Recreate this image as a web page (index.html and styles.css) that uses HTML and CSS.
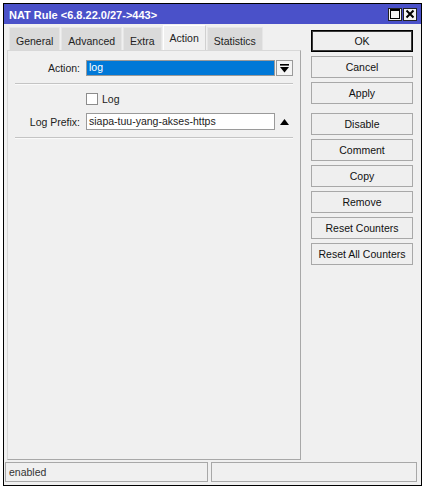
FILE: index.html
```html
<!DOCTYPE html>
<html>
<head>
<meta charset="utf-8">
<link rel="stylesheet" href="styles.css">
</head>
<body>
<div class="window">
  <div class="titlebar">
    <span class="title">NAT Rule &lt;6.8.22.0/27-&gt;443&gt;</span>
    <div class="tb-btns">
      <span class="tb-btn"><svg width="10" height="10" viewBox="0 0 10 10"><rect x="0.5" y="0.5" width="9" height="9" fill="none" stroke="#000" stroke-width="1"/><rect x="0" y="0" width="10" height="2" fill="#000"/></svg></span>
      <span class="tb-btn"><svg width="10" height="10" viewBox="0 0 10 10"><path d="M1.5 1.5 L8.5 8.5 M8.5 1.5 L1.5 8.5" stroke="#000" stroke-width="2"/></svg></span>
    </div>
  </div>
  <div class="main">
    <div class="left">
      <div class="tabs">
        <span class="tab">General</span>
        <span class="tab">Advanced</span>
        <span class="tab">Extra</span>
        <span class="tab active">Action</span>
        <span class="tab">Statistics</span>
      </div>
      <div class="panel">
        <div class="row row-action">
          <span class="label">Action:</span>
          <span class="select">log</span>
          <span class="dd-btn"><svg width="9" height="9" viewBox="0 0 9 9"><rect x="0" y="0" width="9" height="1.6" fill="#000"/><polygon points="0,3 9,3 4.5,8.5" fill="#000"/></svg></span>
        </div>
        <div class="sep"></div>
        <div class="row row-check">
          <span class="label"></span>
          <span class="checkbox"></span>
          <span class="check-label">Log</span>
        </div>
        <div class="row row-prefix">
          <span class="label">Log Prefix:</span>
          <span class="input">siapa-tuu-yang-akses-https</span>
          <span class="up-btn"><svg width="9" height="6" viewBox="0 0 9 6"><polygon points="0,6 9,6 4.5,0" fill="#000"/></svg></span>
        </div>
        <div class="sep"></div>
      </div>
    </div>
    <div class="buttons">
      <button class="btn default">OK</button>
      <button class="btn">Cancel</button>
      <button class="btn">Apply</button>
      <button class="btn group">Disable</button>
      <button class="btn">Comment</button>
      <button class="btn">Copy</button>
      <button class="btn">Remove</button>
      <button class="btn">Reset Counters</button>
      <button class="btn">Reset All Counters</button>
    </div>
  </div>
  <div class="status">
    <div class="field">enabled</div>
    <div class="field"></div>
  </div>
</div>
</body>
</html>
```

FILE: styles.css
```css
* { box-sizing: border-box; }
html, body { margin: 0; padding: 0; }
body {
  background: #ffffff;
  font-family: "Liberation Sans", Arial, sans-serif;
  font-size: 10.5px;
  color: #000;
  width: 425px;
  height: 486px;
  overflow: hidden;
}
.window {
  margin: 3px 0 0 3px;
  width: 419px;
  height: 483px;
  border: 1px solid #000;
  background: #f0f0f0;
  display: flex;
  flex-direction: column;
}
.titlebar {
  height: 20px;
  background: #4a51c9;
  display: flex;
  align-items: center;
  justify-content: space-between;
  padding: 0 4px 0 5px;
}
.title {
  color: #fff;
  font-weight: bold;
  font-size: 11px;
  padding-top: 1px;
}
.tb-btns { display: flex; gap: 1px; }
.tb-btn {
  width: 14px;
  height: 13px;
  background: #f4f4f4;
  border: 1px solid #222;
  display: flex;
  align-items: center;
  justify-content: center;
}
.main {
  height: 436px;
  display: flex;
}
.left {
  margin-left: 3px;
  width: 294px;
  display: flex;
  flex-direction: column;
}
.tabs {
  height: 26px;
  display: flex;
  align-items: flex-end;
  padding-left: 2px;
  gap: 1px;
}
.tab {
  height: 23px;
  padding: 7px 6px 0;
  background: #dadada;
  border: 1px solid #e6e6e6;
  border-bottom: none;
  color: #222;
}
.tab.active {
  height: 25px;
  padding-top: 6px;
  background: #f0f0f0;
  border-color: #ffffff #d0d0d0 #f0f0f0 #ffffff;
}
.panel {
  flex: 1;
  border-left: 1px solid #d8d8d8;
  border-top: 1px solid #d8d8d8;
  border-right: 1px solid #a8a8a8;
  border-bottom: 1px solid #a8a8a8;
  padding: 9px 7px 0 1px;
}
.row { display: flex; align-items: center; }
.label {
  width: 71px;
  text-align: right;
  color: #222;
  margin-right: 6px;
  flex: none;
}
.row-action { height: 16px; }
.select {
  width: 190px;
  height: 16px;
  background: #0078d7;
  color: #fff;
  border: 1px solid #9a9a9a;
  padding: 0 2px;
  line-height: 13px;
}
.dd-btn {
  margin-left: 1px;
  width: 17px;
  height: 16px;
  border: 1px solid #9a9a9a;
  background: #f4f4f4;
  display: flex;
  align-items: center;
  justify-content: center;
}
.sep {
  margin: 7px 0 0 6px;
  height: 1px;
  background: #c4c4c4;
  border-bottom: 1px solid #fafafa;
  height: 2px;
}
.row-check { margin-top: 8px; height: 12px; }
.checkbox {
  width: 12px;
  height: 12px;
  background: #fff;
  border: 1px solid #8c8c8c;
}
.check-label { margin-left: 4px; color: #222; }
.row-prefix { margin-top: 8px; height: 17px; }
.input {
  width: 190px;
  height: 17px;
  background: #fff;
  border: 1px solid #9a9a9a;
  padding: 0 2px;
  line-height: 15px;
  color: #222;
}
.up-btn {
  width: 17px;
  height: 16px;
  margin-left: 1px;
  display: flex;
  align-items: center;
  justify-content: center;
}
.buttons {
  margin-left: 10px;
  padding-top: 6px;
  width: 102px;
  display: flex;
  flex-direction: column;
  gap: 4px;
}
.btn {
  height: 22px;
  width: 102px;
  background: #efefef;
  border: 1px solid #a8a8a8;
  font-family: "Liberation Sans", Arial, sans-serif;
  font-size: 10.5px;
  color: #111;
  padding: 0;
  margin: 0;
}
.btn.default {
  border: 1px solid #000;
  box-shadow: inset 0 0 0 1px #3a3a3a;
}
.btn.group { margin-top: 5px; }
.status {
  margin-top: 2px;
  padding-left: 1px;
  display: flex;
  gap: 3px;
}
.field {
  height: 20px;
  border: 1px solid #a8a8a8;
  padding: 0 3px;
  line-height: 18px;
  color: #333;
}
.field:first-child { width: 203px; }
.field:last-child { width: 206px; }
```
